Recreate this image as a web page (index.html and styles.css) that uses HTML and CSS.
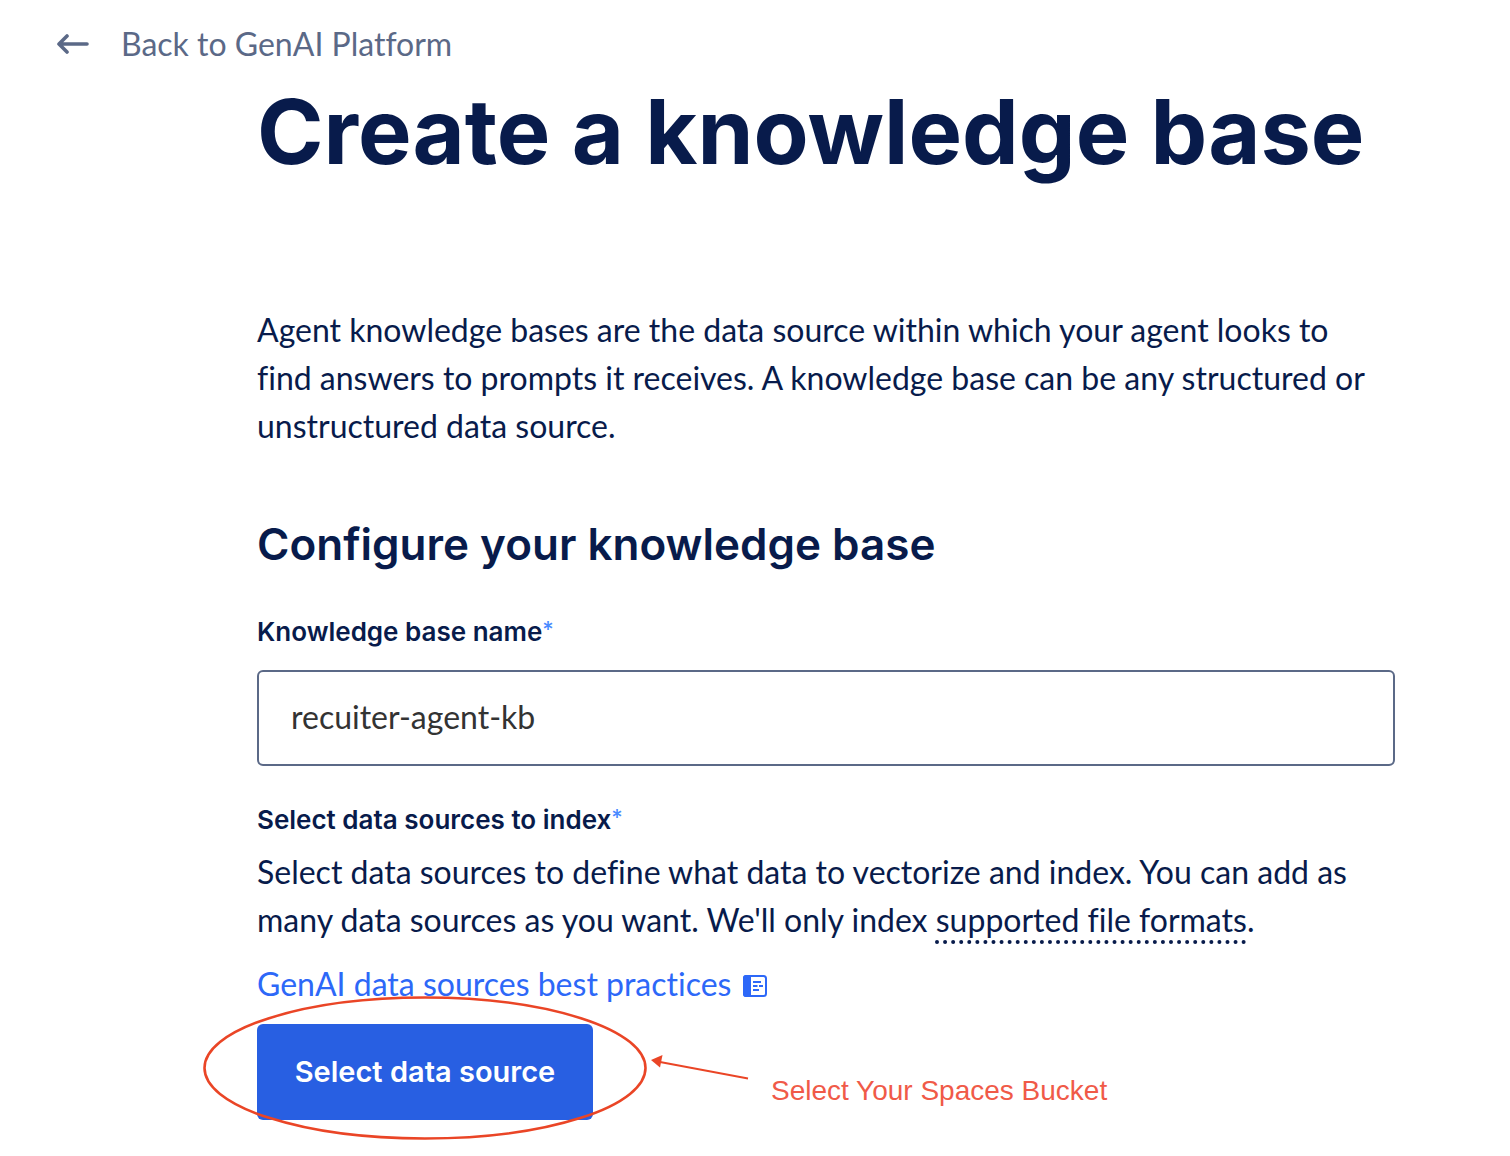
FILE: index.html
```html
<!DOCTYPE html>
<html lang="en">
<head>
<meta charset="utf-8">
<meta name="viewport" content="width=device-width, initial-scale=1">
<title>Create a knowledge base</title>
<link rel="stylesheet" href="styles.css">
</head>
<body>
<nav class="topbar">
  <a class="back-link" href="#">
    <svg class="back-icon" width="32" height="22" viewBox="0 0 32 22" fill="none" stroke="currentColor" stroke-width="3.6" stroke-linecap="round" stroke-linejoin="round" aria-hidden="true">
      <path d="M30 11H3M10 3L2 11L10 19"/>
    </svg>
    <span>Back to GenAI Platform</span>
  </a>
</nav>
<main class="content">
  <h1 class="page-title">Create a knowledge base</h1>
  <p class="text intro">Agent knowledge bases are the data source within which your agent looks to find answers to prompts it receives. A knowledge base can be any structured or unstructured data source.</p>
  <form class="config">
    <h2 class="section-title">Configure your knowledge base</h2>
    <label class="label" for="kb-name">Knowledge base name<span class="required">*</span></label>
    <input class="input" id="kb-name" type="text" value="recuiter-agent-kb" required>
    <h3 class="label sources-label">Select data sources to index<span class="required">*</span></h3>
    <p class="text">Select data sources to define what data to vectorize and index. You can add as many data sources as you want. We'll only index <span class="hint">supported file formats</span>.</p>
    <a class="docs-link" href="#">
      <span>GenAI data sources best practices</span>
      <svg class="docs-icon" width="24" height="22" viewBox="0 0 24 22" aria-hidden="true">
        <rect x="1" y="1" width="22" height="20" rx="2.500" fill="none" stroke="currentColor" stroke-width="2"/>
        <path d="M3 0H8V22H3Q0 22 0 19V3Q0 0 3 0Z" fill="currentColor"/>
        <path d="M10 7H18M10 11H14.500M16 11H20M10 15H16" fill="none" stroke="currentColor" stroke-width="2"/>
      </svg>
    </a>
    <div class="action">
      <button class="button" type="button">Select data source</button>
      <svg class="markup" width="552" height="150" viewBox="0 0 552 150" fill="none" stroke="#ea4526" aria-hidden="true">
        <ellipse cx="225" cy="74" rx="220.500" ry="70.500" stroke-width="2.600"/>
        <path d="M460 68L548 84.500" stroke-width="1.800"/>
        <path d="M451 66L462.500 61L460 73.500Z" fill="#ea4526" stroke="none"/>
      </svg>
      <span class="note">Select Your Spaces Bucket</span>
    </div>
  </form>
</main>
</body>
</html>
```

FILE: styles.css
```css
* {
  box-sizing: border-box;
}

body {
  margin: 0;
  background: #fff;
  color: #081b4b;
  font-family: Lato, "Open Sans", sans-serif;
  font-size: 32px;
  font-variant-ligatures: none;
  line-height: 48px;
}

h1, h2, h3, p {
  margin: 0;
}

.topbar {
  padding: 19px 57px 0;
}

.back-link {
  display: inline-flex;
  align-items: center;
  gap: 32px;
  color: #5b6987;
  text-decoration: none;
}

.content {
  padding: 0 115px 36px 257px;
}

.page-title {
  padding-top: 8px;
  font-family: Inter, sans-serif;
  font-size: 90px;
  font-weight: 700;
  line-height: 112px;
}

.text {
  padding-right: 16px;
}

.intro {
  margin-top: 118px;
}

.config {
  display: flex;
  flex-direction: column;
  align-items: flex-start;
  margin-top: 64px;
}

.section-title {
  font-family: Inter, sans-serif;
  font-size: 44px;
  font-weight: 600;
  line-height: 60px;
}

.label {
  margin-top: 40px;
  font-family: Inter, sans-serif;
  font-size: 26px;
  font-weight: 600;
  line-height: 36px;
}

.required {
  color: #4a8bff;
  font-size: 22px;
  font-weight: 500;
  line-height: 1;
  vertical-align: 4px;
}

.input {
  width: 100%;
  height: 96px;
  margin-top: 20px;
  padding: 0 32px 4px;
  border: 2px solid #5b6987;
  border-radius: 6px;
  background: #fff;
  color: #333;
  font: inherit;
}

.sources-label {
  margin: 36px 0 10px;
}

.hint {
  text-decoration: underline dotted 4px;
  text-decoration-skip-ink: none;
  text-underline-offset: 8px;
}

.docs-link {
  display: inline-flex;
  align-items: center;
  gap: 12px;
  margin-top: 16px;
  color: #2d68f8;
  text-decoration: none;
}

.docs-icon {
  margin-top: 4px;
}

.action {
  position: relative;
  margin-top: 16px;
}

.button {
  height: 96px;
  padding: 0 36px;
  border: 0;
  border-radius: 6px;
  background: #285fe2;
  color: #fff;
  font-family: Inter, sans-serif;
  font-size: 29px;
  font-weight: 600;
  line-height: 48px;
  min-width: 336px;
}

/* Hand-drawn callout around the button */
.markup {
  position: absolute;
  top: -30px;
  left: -57px;
  pointer-events: none;
}

.note {
  position: absolute;
  top: 49px;
  left: 514px;
  color: #f05a48;
  font-family: "Liberation Sans", Arial, sans-serif;
  font-size: 28px;
  line-height: 36px;
  white-space: nowrap;
}
```
